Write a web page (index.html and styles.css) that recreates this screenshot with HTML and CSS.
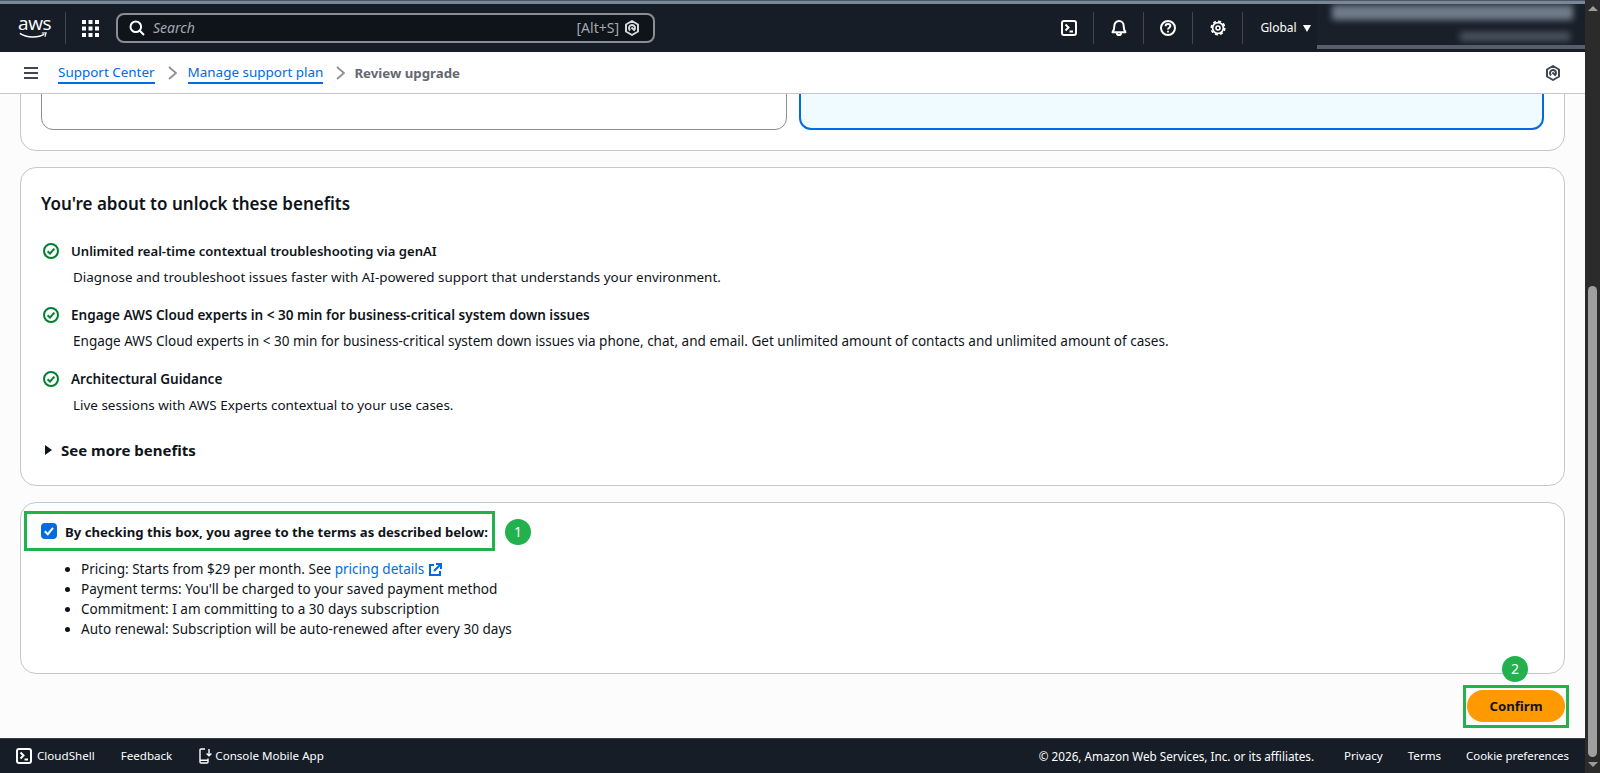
FILE: index.html
```html
<!DOCTYPE html>
<html lang="en">
<head>
<meta charset="utf-8">
<title>Review upgrade</title>
<link rel="stylesheet" href="styles.css">
</head>
<body>
<div class="app">
  <div class="strip"></div>
  <header class="topnav">
    <div class="logo">
      <span class="logo-text">aws</span>
      <svg class="logo-smile" viewBox="0 0 32 8" width="32" height="8"><path d="M1 1.5C9 7 22 7 29 2.5" fill="none" stroke="#fff" stroke-width="1.6"/><path d="M26 1.2L31 1L29.6 5.6" fill="none" stroke="#fff" stroke-width="1.3"/></svg>
    </div>
    <span class="vline logo-line"></span>
    <svg class="grid-icon" width="17" height="17" viewBox="0 0 17 17" fill="#fff"><rect width="4" height="4"/><rect x="6.5" width="4" height="4"/><rect x="13" width="4" height="4"/><rect y="6.5" width="4" height="4"/><rect x="6.5" y="6.5" width="4" height="4"/><rect x="13" y="6.5" width="4" height="4"/><rect y="13" width="4" height="4"/><rect x="6.5" y="13" width="4" height="4"/><rect x="13" y="13" width="4" height="4"/></svg>
    <div class="search">
      <svg width="16" height="16" viewBox="0 0 16 16" fill="none" stroke="#fff" stroke-width="2"><circle cx="6.8" cy="6.8" r="5.3"/><path d="M10.8 10.8L15 15"/></svg>
      <span class="search-ph">Search</span>
      <span class="search-key">[Alt+S]</span>
      <svg class="q-icon" width="16" height="16" viewBox="0 0 16 16" fill="none" stroke="#d5dbdb" stroke-width="2"><path d="M8 1L14 4.5V11.5L8 15L2 11.5V4.5Z" stroke-linejoin="round"/><path d="M10 10.2A3 3 0 1 0 6.2 10.4"/><path d="M7.4 7.4L10.8 10.6"/></svg>
    </div>
    <div class="nav-right">
      <svg class="nav-ico" width="16" height="16" viewBox="0 0 16 16" fill="none" stroke="#fff" stroke-width="2"><rect x="1" y="1" width="14" height="14" rx="2"/><path d="M4.5 4.5L7.5 7.5L4.5 10.5M8.5 11.5H12"/></svg>
      <span class="vline"></span>
      <svg class="nav-ico" width="16" height="16" viewBox="0 0 16 16" fill="none" stroke="#fff" stroke-width="2"><path d="M1.5 12.2H14.5C13 10.5 12.7 9.5 12.7 6.2C12.7 3.3 10.7 1 8 1S3.3 3.3 3.3 6.2C3.3 9.5 3 10.5 1.5 12.2Z" stroke-linejoin="round"/><path d="M5.8 13C6 14.5 7 15 8 15S10 14.5 10.2 13"/></svg>
      <span class="vline"></span>
      <svg class="nav-ico" width="16" height="16" viewBox="0 0 16 16" fill="none" stroke="#fff" stroke-width="2"><circle cx="8" cy="8" r="7"/><path d="M5.6 6.2C5.6 4.8 6.7 3.9 8 3.9S10.4 4.8 10.4 6.1C10.4 7.8 8 7.8 8 9.6"/><path d="M8 10.7V12.4" stroke-width="1.8"/></svg>
      <span class="vline"></span>
      <svg class="nav-ico" width="16" height="16" viewBox="0 0 16 16" fill="none" stroke="#fff"><circle cx="8" cy="8" r="5.4" stroke-width="1.8"/><circle cx="8" cy="8" r="6.8" stroke-width="1.5" stroke-dasharray="3 2.34"/><circle cx="8" cy="8" r="2" stroke-width="1.6"/></svg>
      <span class="vline"></span>
      <span class="region">Global</span>
      <span class="caret"></span>
    </div>
    <div class="account" aria-hidden="true">
      <span class="blur-a"></span>
      <span class="blur-b"></span>
      <span class="blur-c"></span>
    </div>
  </header>
  <nav class="crumbs">
    <svg class="burger" width="14" height="12" viewBox="0 0 14 12" fill="#424650"><rect width="14" height="2"/><rect y="5" width="14" height="2"/><rect y="10" width="14" height="2"/></svg>
    <a class="crumb-link">Support Center</a>
    <svg class="chev" width="9" height="14" viewBox="0 0 9 14" fill="none" stroke="#8c8c94" stroke-width="1.7"><path d="M1 1L8 7L1 13"/></svg>
    <a class="crumb-link">Manage support plan</a>
    <svg class="chev" width="9" height="14" viewBox="0 0 9 14" fill="none" stroke="#8c8c94" stroke-width="1.7"><path d="M1 1L8 7L1 13"/></svg>
    <span class="crumb-current">Review upgrade</span>
    <svg class="q-right" width="16" height="16" viewBox="0 0 16 16" fill="none" stroke="#424650" stroke-width="2"><path d="M8 1L14 4.5V11.5L8 15L2 11.5V4.5Z" stroke-linejoin="round"/><path d="M10 10.2A3 3 0 1 0 6.2 10.4"/><path d="M7.4 7.4L10.8 10.6"/></svg>
  </nav>
  <main class="main">
    <section class="panel plans">
      <div class="plan plan-a"></div>
      <div class="plan plan-b"></div>
    </section>
    <section class="panel benefits">
      <h2 class="benefits-title">You're about to unlock these benefits</h2>
      <div class="benefit">
        <div class="benefit-head head-tight">
          <svg class="ok" width="16" height="16" viewBox="0 0 16 16" fill="none" stroke="#00802f" stroke-width="2"><circle cx="8" cy="8" r="7"/><path d="M4.6 8.2L7 10.6L11.4 5.6"/></svg>
          <strong>Unlimited real-time contextual troubleshooting via genAI</strong>
        </div>
        <p class="benefit-desc">Diagnose and troubleshoot issues faster with AI-powered support that understands your environment.</p>
      </div>
      <div class="benefit">
        <div class="benefit-head">
          <svg class="ok" width="16" height="16" viewBox="0 0 16 16" fill="none" stroke="#00802f" stroke-width="2"><circle cx="8" cy="8" r="7"/><path d="M4.6 8.2L7 10.6L11.4 5.6"/></svg>
          <strong>Engage AWS Cloud experts in &lt; 30 min for business-critical system down issues</strong>
        </div>
        <p class="benefit-desc desc-mid">Engage AWS Cloud experts in &lt; 30 min for business-critical system down issues via phone, chat, and email. Get unlimited amount of contacts and unlimited amount of cases.</p>
      </div>
      <div class="benefit">
        <div class="benefit-head">
          <svg class="ok" width="16" height="16" viewBox="0 0 16 16" fill="none" stroke="#00802f" stroke-width="2"><circle cx="8" cy="8" r="7"/><path d="M4.6 8.2L7 10.6L11.4 5.6"/></svg>
          <strong>Architectural Guidance</strong>
        </div>
        <p class="benefit-desc">Live sessions with AWS Experts contextual to your use cases.</p>
      </div>
      <div class="more"><span class="more-caret"></span><span>See more benefits</span></div>
    </section>
    <section class="panel terms">
      <div class="terms-head">
        <span class="check"><svg width="16" height="16" viewBox="0 0 16 16" fill="none" stroke="#fff" stroke-width="2"><path d="M3.8 8.3L6.8 11.2L12 4.9"/></svg></span>
        <strong class="terms-label">By checking this box, you agree to the terms as described below:</strong>
        <span class="badge badge-one">1</span>
      </div>
      <ul class="terms-list">
        <li>Pricing: Starts from $29 per month. See <a class="ext">pricing details</a> <svg class="ext-ico" width="13" height="13" viewBox="0 0 13 13" fill="none" stroke="#006ce0" stroke-width="2"><path d="M5 2H1V12H11V8"/><path d="M5 8L11.5 1.5M7 1H12V6"/></svg></li>
        <li>Payment terms: You'll be charged to your saved payment method</li>
        <li>Commitment: I am committing to a 30 days subscription</li>
        <li>Auto renewal: Subscription will be auto-renewed after every 30 days</li>
      </ul>
    </section>
    <div class="actions">
      <div class="confirm-wrap">
        <span class="confirm-box"></span>
        <span class="badge badge-two">2</span>
        <button class="confirm">Confirm</button>
      </div>
    </div>
  </main>
  <footer class="footer">
    <svg width="16" height="16" viewBox="0 0 16 16" fill="none" stroke="#fff" stroke-width="2"><rect x="1" y="1" width="14" height="14" rx="2"/><path d="M4.5 4.5L7.5 7.5L4.5 10.5M8.5 11.5H12"/></svg>
    <span class="f-shell">CloudShell</span>
    <span class="f-feedback">Feedback</span>
    <svg class="f-phone" width="13" height="16" viewBox="0 0 13 16" fill="none" stroke="#fff" stroke-width="1.4"><path d="M6 1H2Q1 1 1 2V14Q1 15 2 15H8Q9 15 9 14V10.5"/><path d="M1 12.3H9M10 1V7.5M7.6 5.4L10 7.8L12.4 5.4"/></svg>
    <span class="f-app">Console Mobile App</span>
    <span class="f-copy">© 2026, Amazon Web Services, Inc. or its affiliates.</span>
    <span class="f-link f-privacy">Privacy</span>
    <span class="f-link">Terms</span>
    <span class="f-link f-cookie">Cookie preferences</span>
  </footer>
</div>
<div class="scrollbar">
  <span class="sb-up"></span>
  <div class="sb-track"><span class="sb-thumb"></span></div>
  <span class="sb-down"></span>
</div>
</body>
</html>
```

FILE: styles.css
```css
* { box-sizing: border-box; }
html, body { margin: 0; height: 100%; }
body {
  display: flex;
  width: 1600px;
  height: 773px;
  overflow: hidden;
  font-family: "Noto Sans", "Open Sans", sans-serif;
  font-size: 13.44px;
  line-height: 20px;
  color: #0f141a;
  background: #fcfcfd;
}
.app { flex: 1; min-width: 0; display: flex; flex-direction: column; }
.strip { height: 4px; background: #7a8797; border-top: 1px solid #4c5664; }
.topnav {
  position: relative;
  height: 48px;
  display: flex;
  align-items: center;
  background: #161d26;
  color: #fff;
  padding-left: 18px;
}
.logo { width: 31px; height: 24px; display: flex; flex-direction: column; margin-top: -3px; }
.logo-text { font-family: "Open Sans", sans-serif; font-size: 19px; line-height: 17px; letter-spacing: -0.4px; }
.logo-smile { margin-left: -1px; }
.vline { width: 1px; height: 32px; background: #424650; flex: none; }
.logo-line { margin-left: 16px; }
.grid-icon { margin-left: 16px; }
.search {
  margin-left: 17px;
  width: 539px;
  height: 30px;
  border: 2px solid #8c8c94;
  border-radius: 8px;
  background: #0f141a;
  display: flex;
  align-items: center;
  padding: 0 13px 0 11px;
  font-size: 14px;
}
.search-ph { margin-left: 8px; font-style: italic; color: #a4a7af; }
.search-key { margin-left: auto; color: #a4a7af; }
.q-icon { margin-left: 5px; }
.nav-right { margin-left: 406px; display: flex; align-items: center; }
.nav-ico { flex: none; }
.nav-right .vline { margin: 0 16.3px; }
.region { font-size: 12px; margin-left: 1px; }
.caret {
  margin-left: 6px;
  width: 0; height: 0;
  border-left: 4px solid transparent;
  border-right: 4px solid transparent;
  border-top: 7px solid #fff;
}
.account {
  position: absolute;
  left: 1317px;
  top: 0;
  width: 268px;
  height: 45px;
  background: #19202a;
  overflow: hidden;
}
.blur-a { position: absolute; left: 15px; top: 1px; width: 241px; height: 15px; background: #707c8a; filter: blur(3px); }
.blur-b { position: absolute; left: 143px; top: 28px; width: 110px; height: 9px; background: #4a535f; filter: blur(3px); }
.blur-c { position: absolute; left: 0; bottom: 0; width: 100%; height: 4px; background: #555e6a; }
.crumbs {
  height: 42px;
  flex: none;
  display: flex;
  align-items: center;
  background: #fff;
  border-bottom: 1px solid #c6c6cd;
  padding: 0 24px;
  position: relative;
  z-index: 2;
}
.burger { flex: none; margin-right: 20px; }
.crumb-link {
  color: #006ce0;
  border-bottom: 2px solid #006ce0;
  line-height: 19px;
  margin-top: 1px;
}
.chev { margin: 0 11px 0 13px; flex: none; }
.crumb-current { font-weight: 700; font-size: 13.25px; color: #656871; margin-left: -2px; }
.q-right { margin-left: auto; }
.main { flex: 1; min-height: 0; overflow: hidden; padding: 0 20px; }
.panel { background: #fff; border: 1px solid #c6c6cd; border-radius: 16px; }
.plans {
  height: 120px;
  margin-top: -63px;
  padding: 0 20px;
  display: flex;
  gap: 12px;
}
.plan { height: 99px; margin-top: -1px; border-radius: 12px; }
.plan-a { flex: 0 0 746px; border: 1px solid #8c8c94; }
.plan-b { flex: 1; border: 2px solid #006ce0; background: #f0fbff; }
.benefits { height: 319px; margin-top: 16px; padding: 24px 20px 0; }
.benefits-title { margin: 0 0 25px; font-size: 17px; line-height: 24px; font-weight: 600; }
.benefit { margin-bottom: 18px; }
.benefit-head { display: flex; align-items: center; gap: 12px; font-size: 13.55px; }
.head-tight { font-size: 13.1px; }
.benefit-head strong { font-weight: 600; }
.ok { flex: none; margin-left: 2px; }
.benefit-desc { margin: 6px 0 0 32px; }
.desc-mid { font-size: 13.54px; }
.more { display: flex; align-items: center; margin-top: 24px; font-size: 15px; line-height: 22px; font-weight: 700; }
.more-caret {
  width: 0; height: 0; margin: 0 9px 0 4px;
  border-top: 5px solid transparent;
  border-bottom: 5px solid transparent;
  border-left: 7px solid #0f141a;
}
.terms { height: 172px; margin-top: 16px; padding-top: 8px; }
.terms-head {
  position: relative;
  margin-left: 3px;
  width: 471px;
  height: 40px;
  border: 3px solid #22b14c;
  padding-left: 14px;
  display: flex;
  align-items: center;
  gap: 8px;
}
.terms-label { font-size: 13.15px; padding-top: 2px; }
.check { width: 16px; height: 16px; border-radius: 4px; background: #006ce0; flex: none; display: block; }
.check svg { display: block; }
.badge {
  position: absolute;
  width: 26px;
  height: 26px;
  border-radius: 50%;
  background: #22b14c;
  color: #fff;
  font-size: 14px;
  line-height: 26px;
  text-align: center;
}
.badge-one { right: -39px; top: 5px; }
.terms-list { list-style: disc; margin: 8px 0 0; padding: 0 0 0 60px; font-size: 13.55px; }
.ext { color: #006ce0; }
.ext-ico { vertical-align: -2px; margin-left: 1px; }
.actions { margin-top: 16px; display: flex; justify-content: flex-end; }
.confirm-wrap { position: relative; width: 98px; height: 32px; }
.confirm {
  display: block;
  width: 100%;
  height: 100%;
  border: 0;
  border-radius: 16px;
  background: #ff9900;
  color: #0f141a;
  font: 700 13.2px/20px "Noto Sans", sans-serif;
}
.confirm-box { position: absolute; inset: -5px -4px -6px -4px; border: 3px solid #22b14c; }
.badge-two { left: 35px; top: -34px; z-index: 2; }
.footer {
  height: 35px;
  flex: none;
  display: flex;
  align-items: center;
  background: #161d26;
  border-top: 1px solid #333c48;
  color: #fff;
  font-size: 11.6px;
  padding: 0 16px;
}
.f-shell { margin-left: 5px; }
.f-feedback { margin-left: 26px; }
.f-phone { margin-left: 27px; flex: none; }
.f-app { margin-left: 3px; }
.f-copy { margin-left: auto; font-size: 11.7px; }
.f-link { margin-left: 25px; }
.f-privacy { margin-left: 30px; }
.f-cookie { font-size: 11.4px; }
.scrollbar { width: 15px; flex: none; background: #2b2b2b; display: flex; flex-direction: column; align-items: center; }
.sb-up, .sb-down { width: 0; height: 0; flex: none; border-left: 5px solid transparent; border-right: 5px solid transparent; }
.sb-up { margin-top: 6px; border-bottom: 5px solid #9b9b9b; }
.sb-down { margin-bottom: 6px; border-top: 5px solid #9b9b9b; }
.sb-track { flex: 1; width: 100%; display: flex; justify-content: center; align-items: flex-end; padding-bottom: 5px; }
.sb-thumb { width: 9px; height: 471px; border-radius: 5px; background: #9f9f9f; }
```
